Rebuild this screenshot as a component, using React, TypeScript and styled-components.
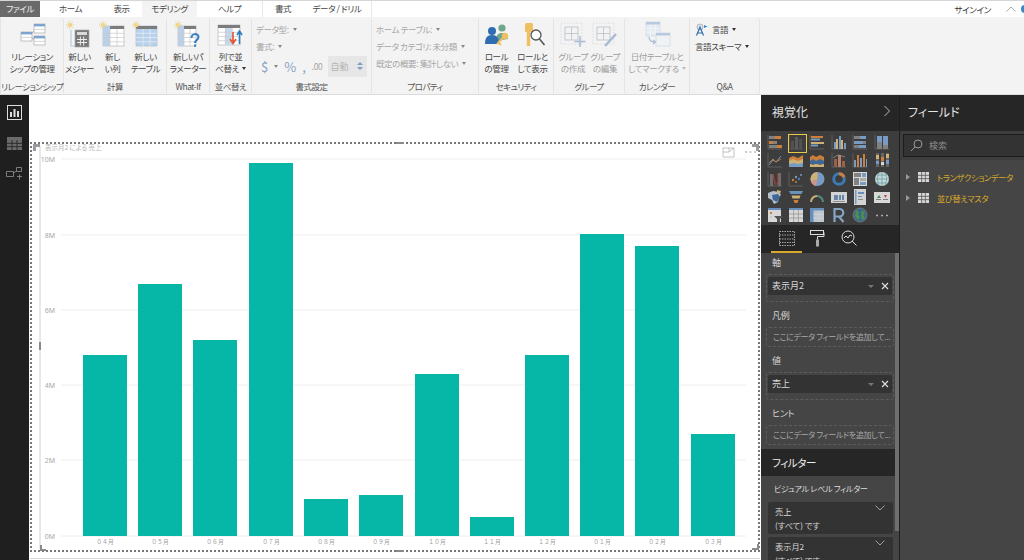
import React from 'react'
import styled, {createGlobalStyle} from 'styled-components'

const GlobalStyle = createGlobalStyle`
  html, body {
    margin: 0;
    padding: 0;
    background: #fff;
  }
  * {
    box-sizing: border-box;
  }
`

const Page = styled.div`
  width: 1024px;
  height: 560px;
  overflow: hidden;
  display: flex;
  flex-direction: column;
  font-family: "Noto Sans CJK JP", "Noto Sans", sans-serif;
  font-feature-settings: "palt";
  color: #444;
`

const TabBar = styled.div`
  height: 17px;
  flex: none;
  display: flex;
  align-items: stretch;
  border-top: 1px solid #d6d6d6;
  background: #fff;
  font-size: 8.5px;
  letter-spacing: -0.4px;
  line-height: 15px;
`

const Tab = styled.div<{$w: number; $active?: boolean; $file?: boolean; $sep?: boolean}>`
  width: ${p => p.$w}px;
  flex: none;
  text-align: center;
  white-space: nowrap;
  color: ${p => (p.$file ? '#eee' : '#444')};
  background: ${p => (p.$file ? '#6a6a6a' : p.$active ? '#f3f3f3' : '#fff')};
  border-right: ${p => (p.$sep ? '1px solid #e8e8e8' : 'none')};
`

const SignIn = styled.div`
  margin-left: auto;
  display: flex;
  align-items: center;
  gap: 5px;
  font-size: 8.5px;
  letter-spacing: -0.3px;
  color: #333;
`

const SignInLabel = styled.span`
  margin-right: 10px;
`

const Ribbon = styled.div`
  height: 78px;
  flex: none;
  display: flex;
  background: #f3f3f3;
  border-bottom: 1px solid #dcdcdc;
  border-left: 1px solid #e4e4e4;
`

const Group = styled.section<{$w: number}>`
  width: ${p => p.$w}px;
  flex: none;
  display: flex;
  flex-direction: column;
  margin: 2px 0 1px;
  border-right: 1px solid #e4e4e4;
`

const GroupBody = styled.div<{$disabled?: boolean; $shift?: number}>`
  flex: 1;
  display: flex;
  justify-content: center;
  min-height: 0;
  padding-right: ${p => p.$shift ?? 0}px;
  opacity: ${p => (p.$disabled ? 0.5 : 1)};
`

const GroupTitle = styled.div`
  height: 13px;
  flex: none;
  text-align: center;
  font-size: 8.5px;
  letter-spacing: -0.5px;
  line-height: 13px;
  color: #555;
  white-space: nowrap;
`

const RibbonButton = styled.div<{$w?: number}>`
  width: ${p => p.$w ?? 33}px;
  flex: none;
  display: flex;
  flex-direction: column;
  align-items: center;
  padding-top: 2px;
  font-size: 8.5px;
  letter-spacing: -0.4px;
  line-height: 12px;
  text-align: center;
  white-space: nowrap;
  color: #444;

  svg {
    display: block;
    margin-bottom: 1px;
  }
`

const ButtonLine = styled.span`
  display: flex;
  align-items: center;
  gap: 3px;
`

const OptionColumn = styled.div<{$pad: number}>`
  flex: 1;
  display: flex;
  flex-direction: column;
  padding: 4px 0 0 ${p => p.$pad}px;
  gap: 4px;
  position: relative;
`

const OptionRow = styled.div<{$color?: string}>`
  height: 13px;
  display: flex;
  align-items: center;
  gap: 4px;
  font-size: 8.5px;
  letter-spacing: -0.4px;
  line-height: 13px;
  white-space: nowrap;
  color: ${p => p.$color ?? '#a5a5a5'};
`

const Caret = styled.span<{$dark?: boolean}>`
  display: inline-block;
  width: 0;
  height: 0;
  border-left: 2.5px solid transparent;
  border-right: 2.5px solid transparent;
  border-top: 3px solid ${p => (p.$dark ? '#333' : '#888')};
`

const FormatRow = styled.div`
  display: flex;
  align-items: center;
  height: 22px;
  margin-top: -2px;
  padding: 0 4px 0 5px;
  color: #8aa4c6;
  font-size: 13px;
  gap: 6px;
`

const Spinner = styled.div`
  width: 40px;
  height: 21px;
  margin-left: auto;
  background: #e6e6e6;
  color: #b5b5b5;
  font-size: 9px;
  display: flex;
  align-items: center;
  justify-content: space-between;
  padding: 0 4px 0 2px;
`

const SpinArrows = styled.div`
  display: flex;
  flex-direction: column;
  gap: 2px;
  align-items: center;
`

const SpinUp = styled.span`
  width: 0;
  height: 0;
  border-left: 3px solid transparent;
  border-right: 3px solid transparent;
  border-bottom: 3px solid #7f9cc0;
`

const SpinDown = styled(SpinUp)`
  border-bottom: none;
  border-top: 3px solid #7f9cc0;
`

const Body = styled.div`
  flex: 1;
  display: flex;
  min-height: 0;
`

const Rail = styled.nav`
  width: 29px;
  flex: none;
  background: #1f1f1f;
  display: flex;
  flex-direction: column;
  align-items: center;
  gap: 16px;
  padding-top: 10px;
`

const Canvas = styled.main`
  width: 732px;
  flex: none;
  background: #fff;
  padding: 47px 1px 0 1px;
`

const VisualFrame = styled.div`
  height: 410px;
  border: 2px dotted #777;
  position: relative;
`

const ChartSvg = styled.svg`
  display: block;
  position: absolute;
  left: -2px;
  top: -2px;
`

const MonthLabel = styled.text`
  font-family: "Noto Sans CJK JP", sans-serif;
  font-feature-settings: normal;
  font-size: 5.8px;
  fill: #a0a0a0;
  text-anchor: middle;
`

const CanvasEdge = styled.div`
  height: 1px;
  margin-top: 6px;
  background: #d8d8d8;
`

const VizPanel = styled.aside`
  width: 139px;
  flex: none;
  background: #454545;
  display: flex;
  flex-direction: column;
  border-right: 1px solid #1e1e1e;
  min-height: 0;
`

const FieldPanel = styled.aside`
  flex: 1;
  background: #454545;
  display: flex;
  flex-direction: column;
  min-width: 0;
`

const PanelHeader = styled.header<{$left: number}>`
  height: 36px;
  flex: none;
  background: #262626;
  color: #e4e4e4;
  font-size: 12px;
  display: flex;
  align-items: center;
  justify-content: space-between;
  padding: 0 8px 4px ${p => p.$left}px;
`

const Gallery = styled.div`
  height: 94px;
  flex: none;
  background: #3d3d3d;
  display: grid;
  grid-template-columns: repeat(6, 21.4px);
  grid-auto-rows: 18.3px;
  padding: 2px 0 0 3px;
`

const GalleryCell = styled.div<{$selected?: boolean}>`
  display: flex;
  align-items: center;
  justify-content: center;
  position: relative;
  svg {
    opacity: 0.88;
  }
  &::after {
    content: '';
    display: ${p => (p.$selected ? 'block' : 'none')};
    position: absolute;
    left: 2.5px;
    top: 1px;
    width: 17px;
    height: 17px;
    border: 1px solid #e6c84a;
  }
`

const PaneTabs = styled.div`
  height: 28px;
  flex: none;
  background: #262626;
  display: flex;
  align-items: stretch;
  padding-left: 10px;
`

const PaneTab = styled.div<{$active?: boolean}>`
  width: 31px;
  display: flex;
  align-items: center;
  justify-content: center;
  border-bottom: 2px solid ${p => (p.$active ? '#d9a92b' : 'transparent')};
`

const WellArea = styled.div`
  flex: 1;
  min-height: 0;
  display: flex;
  position: relative;
`

const WellScroll = styled.div`
  flex: 1;
  min-width: 0;
  display: flex;
  flex-direction: column;
`

const ScrollThumb = styled.div`
  position: absolute;
  right: 0;
  top: 0;
  width: 4px;
  height: 278px;
  background: #6f6f6f;
`

const WellTitle = styled.div`
  font-size: 9px;
  letter-spacing: -0.2px;
  line-height: 14px;
  color: #d6d6d6;
  padding-left: 11px;
  margin-top: 3px;
`

const DropZone = styled.div<{$filled?: boolean}>`
  margin: 4px 5px 4px 5px;
  height: ${p => (p.$filled ? 28 : 20)}px;
  flex: none;
  border: 1px dashed #5c5c5c;
  border-radius: 3px;
  padding: ${p => (p.$filled ? '2px 1px' : '0 0 0 6px')};
  font-size: 8px;
  letter-spacing: -0.35px;
  line-height: 18px;
  color: #a9a9a9;
  white-space: nowrap;
  overflow: hidden;
`

const FieldPill = styled.div`
  height: 18px;
  background: #333;
  border-radius: 2px;
  color: #d8d8d8;
  font-size: 9px;
  letter-spacing: 0;
  display: flex;
  align-items: center;
  padding: 0 3px 0 4px;
`

const PillCaret = styled.span`
  margin-left: auto;
  margin-right: 7px;
  width: 0;
  height: 0;
  border-left: 3px solid transparent;
  border-right: 3px solid transparent;
  border-top: 3px solid #777;
`

const FilterHeader = styled.div`
  height: 27px;
  flex: none;
  background: #262626;
  color: #eee;
  font-size: 10.5px;
  letter-spacing: -0.4px;
  line-height: 27px;
  padding-left: 11px;
`

const FilterTitle = styled.div`
  font-size: 8px;
  letter-spacing: -0.25px;
  line-height: 14px;
  color: #ddd;
  padding: 6px 0 0 13px;
  margin-bottom: 6px;
`

const FilterCard = styled.div`
  margin: 0 6px 3px 7px;
  height: 32px;
  flex: none;
  background: #333;
  border-radius: 2px;
  color: #d8d8d8;
  font-size: 8.2px;
  line-height: 14px;
  padding: 2px 5px 0 7px;
  position: relative;
  svg {
    position: absolute;
    right: 8px;
    top: 3px;
  }
`

const SearchRow = styled.div`
  height: 29px;
  flex: none;
  background: #3d3d3d;
  padding: 3px 0 3px 3px;
`

const SearchBox = styled.div`
  height: 23px;
  background: #333;
  border: 1px solid #1c1c1c;
  border-right: none;
  display: flex;
  align-items: center;
  gap: 6px;
  padding-left: 6px;
  font-size: 9px;
  color: #8c8c8c;
`

const FieldTree = styled.div`
  padding: 8px 0 0 6px;
  display: flex;
  flex-direction: column;
  gap: 3px;
`

const TreeRow = styled.div`
  height: 18px;
  display: flex;
  align-items: center;
  font-size: 8.2px;
  letter-spacing: -0.35px;
  color: #d9a92b;
  white-space: nowrap;
  gap: 8px;
  svg {
    flex: none;
  }
`

const TreeCaret = styled.span`
  flex: none;
  width: 0;
  height: 0;
  border-top: 3px solid transparent;
  border-bottom: 3px solid transparent;
  border-left: 4px solid #999;
`

const Sun = ({x = 1, y = 1}: {x?: number; y?: number}) => (
  <g>
    <circle cx={x + 3} cy={y + 3} r="2.2" fill="#f0d68a" />
    <path
      d={`M${x + 3} ${y - 1}v1.4M${x + 3} ${y + 5.6}v1.4M${x - 1} ${y + 3}h1.4M${x + 5.6} ${y + 3}h1.4M${x + 0.2} ${y + 0.2}l1 1M${x + 4.8} ${y + 4.8}l1 1M${x + 5.8} ${y + 0.2}l-1 1M${x + 0.2} ${y + 5.8}l1-1`}
      stroke="#e3c06c"
      strokeWidth=".7"
    />
  </g>
)

const gridPath = (x: number, y: number, w: number, h: number, cols: number, rows: number) => {
  let d = ''
  for (let i = 1; i < cols; i++) d += `M${x + (w * i) / cols} ${y}v${h}`
  for (let i = 1; i < rows; i++) d += `M${x} ${y + (h * i) / rows}h${w}`
  return d
}

const Ico = ({w = 28, h = 28, children}: {w?: number; h?: number; children: React.ReactNode}) => (
  <svg width={w} height={h} viewBox={`0 0 ${w} ${h}`}>
    {children}
  </svg>
)

const MiniTable = ({x, y, w = 11, h = 9}: {x: number; y: number; w?: number; h?: number}) => (
  <g>
    <rect x={x} y={y} width={w} height={h} fill="#fff" stroke="#a9a9a9" strokeWidth=".7" />
    <rect x={x} y={y} width={w} height="2.4" fill="#7ea3cf" />
    <path d={`M${x} ${y + 5.4}h${w}`} stroke="#c4c4c4" strokeWidth=".7" />
  </g>
)

const RelationIcon = () => (
  <Ico>
    <path d="M13 13L18 8M13 16L18 20" stroke="#8c8c8c" strokeWidth=".8" fill="none" />
    <MiniTable x={16} y={3} />
    <MiniTable x={3} y={11} />
    <MiniTable x={16} y={15} />
  </Ico>
)

const MeasureIcon = () => (
  <Ico>
    <Sun x={1} y={1} />
    <path d="M5 9v16h6" stroke="#b5cde6" strokeWidth="1.2" fill="none" />
    <rect x="9" y="9" width="14" height="17" fill="#777" stroke="#aaa" strokeWidth=".7" />
    <rect x="11" y="11" width="10" height="3" fill="#d9d9d9" />
    <path d={gridPath(11, 15.5, 10, 9, 3, 3)} stroke="#eee" strokeWidth="1" />
  </Ico>
)

const ColumnIcon = () => (
  <Ico>
    <rect x="4" y="5" width="21" height="20" fill="#fff" stroke="#b5b5b5" strokeWidth=".7" />
    <rect x="4" y="5" width="21" height="3" fill="#7c7c7c" />
    <rect x="4" y="5" width="7" height="20" fill="#b9d1ea" />
    <path d={gridPath(4, 8, 21, 17, 3, 4)} stroke="#c9c9c9" strokeWidth=".7" />
    <Sun x={1} y={1} />
  </Ico>
)

const TableIcon = () => (
  <Ico>
    <rect x="4" y="5" width="21" height="20" fill="#b9d1ea" stroke="#a9bcd2" strokeWidth=".7" />
    <rect x="4" y="5" width="21" height="3" fill="#7c7c7c" />
    <path d={gridPath(4, 8, 21, 17, 3, 4)} stroke="#e8f0f8" strokeWidth=".7" />
    <Sun x={1} y={1} />
  </Ico>
)

const ParamIcon = () => (
  <Ico>
    <rect x="4" y="5" width="18" height="20" fill="#fff" stroke="#b5b5b5" strokeWidth=".7" />
    <rect x="4" y="5" width="18" height="3" fill="#7c7c7c" />
    <rect x="4" y="5" width="6" height="20" fill="#b9d1ea" />
    <path d={gridPath(4, 8, 18, 17, 3, 4)} stroke="#c9c9c9" strokeWidth=".7" />
    <Sun x={1} y={1} />
    <path d="M17.5 17c0-5 7-5 7-1 0 3-3.5 3-3.5 6" stroke="#2f7ec2" strokeWidth="2" fill="none" />
    <rect x="20" y="23.5" width="2" height="2.2" fill="#2f7ec2" />
  </Ico>
)

const SortIcon = () => (
  <Ico>
    <rect x="1" y="4" width="22" height="20" fill="#fff" stroke="#b5b5b5" strokeWidth=".7" />
    <rect x="1" y="4" width="22" height="3" fill="#7c7c7c" />
    <rect x="8" y="7" width="7" height="17" fill="#c6d8ec" />
    <path d={gridPath(1, 7, 22, 17, 3, 4)} stroke="#c9c9c9" strokeWidth=".7" />
    <path d="M16 11v11M13 18l3 4.5 3-4.5" stroke="#e0572b" strokeWidth="1.6" fill="none" />
    <path d="M22.5 23V10M20 14l2.5-4 2.5 4" stroke="#2f7ec2" strokeWidth="1.6" fill="none" />
  </Ico>
)

const RoleIcon = () => (
  <Ico>
    <circle cx="19" cy="7" r="3.6" fill="#6fa68c" />
    <path d="M13 20c0-6 2-8 6-8s6 2 6 6z" fill="#6fa68c" />
    <circle cx="9" cy="10" r="4" fill="#2f6db0" />
    <path d="M2 23c0-6 2-9 7-9s7 3 7 9z" fill="#2f6db0" />
    <circle cx="22" cy="15" r="3.2" fill="#f0bf62" />
    <path d="M20 17l-6 6M16 22l2 2" stroke="#f0bf62" strokeWidth="2" />
  </Ico>
)

const ViewAsIcon = () => (
  <Ico>
    <rect x="6" y="2" width="8" height="9" rx="1.5" fill="#f0bf62" />
    <path d="M9.5 10v15" stroke="#f0bf62" strokeWidth="3.4" />
    <circle cx="17" cy="14" r="5" fill="#fff" stroke="#555" strokeWidth="1.3" />
    <path d="M20.5 18l5 6" stroke="#555" strokeWidth="1.6" />
  </Ico>
)

const GroupAddIcon = () => (
  <Ico>
    <rect x="2" y="2" width="21" height="21" fill="#f3f3f3" stroke="#b5b5b5" strokeWidth=".7" strokeDasharray="1.5 1.5" />
    <rect x="6" y="6" width="13" height="13" fill="none" stroke="#8c99aa" strokeWidth=".9" />
    <path d="M12.5 6v13M6 12.5h13" stroke="#8c99aa" strokeWidth=".9" />
    <path d="M21 15v11M15.5 20.5h11" stroke="#5b84b3" strokeWidth="1.5" />
  </Ico>
)

const GroupEditIcon = () => (
  <Ico>
    <rect x="2" y="2" width="21" height="21" fill="#f3f3f3" stroke="#b5b5b5" strokeWidth=".7" strokeDasharray="1.5 1.5" />
    <rect x="6" y="6" width="13" height="13" fill="none" stroke="#8c99aa" strokeWidth=".9" />
    <path d="M12.5 6v13M6 12.5h13" stroke="#8c99aa" strokeWidth=".9" />
    <path d="M14 25l11-12" stroke="#5b84b3" strokeWidth="2.4" />
  </Ico>
)

const DateIcon = () => (
  <Ico>
    <rect x="3" y="1" width="14" height="14" fill="#d7e5f3" stroke="#a9bcd2" strokeWidth=".7" />
    <rect x="3" y="1" width="14" height="2.5" fill="#7ea3cf" />
    <path d={gridPath(3, 3.5, 14, 11.5, 3, 3)} stroke="#fff" strokeWidth=".7" />
    <rect x="13" y="12" width="14" height="13" fill="#eef3f8" stroke="#a9bcd2" strokeWidth=".7" />
    <rect x="13" y="12" width="14" height="2.5" fill="#7ea3cf" />
    <path d="M6 16c0 4 2 5 6 5M10 19l2.500 2-2.500 2" stroke="#5b84b3" strokeWidth="1.1" fill="none" />
  </Ico>
)

const LanguageIcon = () => (
  <Ico w={13} h={13}>
    <circle cx="5" cy="4" r="3" fill="#dfe9f3" stroke="#8a8a8a" strokeWidth=".6" />
    <path d="M1.500 12.500L5 4l3.500 8.500M3 10h4" stroke="#2f6db0" strokeWidth="1.2" fill="none" />
    <path d="M9 2l3.500 1.500L9 5z" fill="#3c86c6" />
  </Ico>
)

type Rect = [number, number, number, number, string]
const OR = '#e0883a'
const GR = '#8b8b8b'
const BL = '#7fa9d6'
const TN = '#e3c27e'
const BR = '#a9664a'

const bars = (rects: Rect[]) => (
  <>
    {rects.map(([x, y, w, h, fill], i) => (
      <rect key={i} x={x} y={y} width={w} height={h} fill={fill} />
    ))}
  </>
)

const axes = <path d="M1 1v14h14" stroke="#707070" strokeWidth=".8" fill="none" />

const galleryIcons: React.ReactNode[] = [
  <>{axes}{bars([[2, 2, 6, 3, GR], [8, 2, 6, 3, OR], [2, 7, 4, 3, OR], [6, 7, 4, 3, GR], [2, 11, 8, 3, GR], [10, 11, 5, 3, OR]])}</>,
  <>{axes}{bars([[3, 7, 3, 8, '#555'], [7, 3, 3, 12, '#606060'], [11, 5, 3, 10, '#555']])}</>,
  <>{axes}{bars([[2, 2, 12, 2, OR], [2, 4.500, 9, 2, BL], [2, 8, 13, 2, TN], [2, 10.500, 7, 2, BL]])}</>,
  <>{axes}{bars([[3, 8, 2, 7, BL], [5, 5, 2, 10, TN], [8, 2, 2, 13, BL], [10, 6, 2, 9, TN], [13, 9, 2, 6, BL]])}</>,
  <>{axes}{bars([[2, 2, 6, 3, GR], [8, 2, 6, 3, BL], [2, 7, 9, 3, BL], [11, 7, 3, 3, GR], [2, 11, 5, 3, GR], [7, 11, 7, 3, BL]])}</>,
  <>{axes}{bars([[3, 2, 5, 6, BL], [3, 8, 5, 7, GR], [9, 2, 5, 9, BL], [9, 11, 5, 4, GR]])}</>,
  <>{axes}<path d="M2 13l4-5 3 2 5-6" stroke={BL} fill="none" strokeWidth=".9" /><path d="M2 11l4-4 3 3 5-3" stroke={OR} fill="none" strokeWidth=".9" /></>,
  <><path d="M1 6l4-2 5 2 5-3v12H1z" fill={OR} /><path d="M1 9l4-2 5 2 5-2v8H1z" fill={TN} /><path d="M1 12l5-1 4 1 5-1v4H1z" fill={BL} /></>,
  <><path d="M1 5l3-2 3 2 4-2 4 2v10H1z" fill={OR} /><path d="M1 9l3-2 3 2 4-2 4 2v3l-4 1-4-1-3 1-3-1z" fill="#3f6ea3" /><path d="M1 12l3 1 3-1 4 1 4-1v3H1z" fill={TN} /></>,
  <>{axes}{bars([[3, 7, 3, 8, BR], [7, 3, 3, 12, '#c98a6c'], [11, 9, 3, 6, BR]])}<path d="M2 6l5-3 7 2" stroke="#aaa" fill="none" strokeWidth=".7" /></>,
  <>{axes}{bars([[2, 8, 2, 7, BL], [5, 3, 2, 12, OR], [8, 6, 2, 9, BL], [11, 2, 2, 13, OR], [14, 7, 1, 8, BL]])}</>,
  <>{bars([[2, 1, 3, 14, '#6c6c6c'], [7, 1, 3, 14, '#6c6c6c'], [12, 1, 3, 14, '#6c6c6c'], [2, 3, 3, 4, TN], [7, 5, 3, 4, OR], [12, 2, 3, 4, TN], [2, 9, 3, 3, BL], [7, 10, 3, 3, '#eee'], [12, 8, 3, 4, BL]])}</>,
  <>{axes}{bars([[3, 3, 3, 12, '#777'], [11, 2, 3, 13, '#777']])}<path d="M6 3l2 10h3V2" stroke="#b5473a" fill="none" strokeWidth="1.2" /></>,
  <>{axes}<circle cx="5" cy="9" r="1.200" fill={OR} /><circle cx="8" cy="6" r="1.200" fill={BL} /><circle cx="11" cy="8" r="1.200" fill="#4c86c8" /><circle cx="13" cy="4" r="1" fill={BL} /><circle cx="8" cy="11" r="1" fill={OR} /></>,
  <><circle cx="8.500" cy="8" r="7" fill={BL} /><path d="M8.500 8V1a7 7 0 0 0-6.500 9.500z" fill={TN} /><path d="M8.500 8L2 10.500A7 7 0 0 0 7 15z" fill="#e0a090" /></>,
  <><circle cx="8" cy="8" r="5.300" fill="none" stroke="#3d82c4" strokeWidth="3" /><path d="M8 2.700a5.300 5.300 0 0 1 5 3.500" fill="none" stroke={OR} strokeWidth="3" /></>,
  <>{bars([[1, 1, 14, 14, '#eee'], [2, 2, 7, 4, GR], [10, 2, 4, 4, BL], [2, 7, 5, 7, GR], [8, 7, 6, 3, '#bbb'], [8, 11, 6, 3, BL]])}</>,
  <><circle cx="8" cy="8" r="7" fill="#d6ecec" /><path d="M1 8h14M8 1v14M3 4h10M3 12h10M5 2c-2 4-2 8 0 12M11 2c2 4 2 8 0 12" stroke="#5a9aa8" strokeWidth=".6" fill="none" /></>,
  <><path d="M1 4l5-2 6 1 2 3-2 2-1 5-4 2-2-4-4-2z" fill="#c5d3e2" /><path d="M5 6l6-1 2 3-3 5-4-2z" fill="#3f6ea3" /><path d="M10 1l4 1-1 3-3-1z" fill={TN} /></>,
  <><path d="M1 2h14l-1.500 3h-11z" fill="#6f9fce" /><path d="M3.500 6.500h9l-1 3h-7z" fill={TN} /><path d="M5.500 11h5l-1 3h-3z" fill={OR} /></>,
  <><path d="M2 13a6 6 0 0 1 6-6" stroke={TN} strokeWidth="2" fill="none" /><path d="M8 7a6 6 0 0 1 6 6" stroke="#5a9a8c" strokeWidth="2" fill="none" /></>,
  <>{bars([[0, 3, 16, 11, '#e8e8e8'], [3, 6, 4, 5, '#6d8fb5'], [8, 6, 2, 5, '#6d8fb5'], [11, 6, 2, 5, '#6d8fb5'], [2, 12, 12, 1, '#999']])}</>,
  <>{bars([[2, 0, 12, 16, '#e8e8e8'], [3, 1, 1.500, 14, BL], [6, 3, 6, 2, '#6d9bd0'], [6, 7, 4, 1, '#6d9bd0'], [6, 10, 5, 1, '#999']])}</>,
  <>{bars([[0, 3, 16, 11, '#eee'], [2, 10, 5, 1, '#888'], [9, 10, 5, 1, '#888']])}<path d="M3 9l2-3 2 3z" fill="#4c9a6a" /><path d="M10 6h3l-1.500 3z" fill="#c0504d" /></>,
  <>{bars([[1, 1, 13, 14, '#eee'], [1, 1, 13, 2, '#6d9bd0'], [3, 5, 2, 2, OR], [3, 9, 2, 2, '#ddd']])}<path d="M7 9h9l-3 3v4l-3-1v-3z" fill="#555" /></>,
  <><rect x="1" y="1" width="14" height="14" fill="#eee" /><rect x="1" y="1" width="14" height="2" fill="#6d9bd0" /><path d={gridPath(1, 3, 14, 12, 3, 3)} stroke="#999" strokeWidth=".7" /></>,
  <><rect x="1" y="1" width="14" height="14" fill="#cfd9e4" /><rect x="1" y="1" width="14" height="2.500" fill="#6d9bd0" /><rect x="1" y="1" width="3.500" height="14" fill="#6d9bd0" /><path d={gridPath(4.500, 3.500, 10.500, 11.500, 2, 3)} stroke="#eee" strokeWidth=".7" /></>,
  <path d="M3.500 15V2h5a3.500 3.500 0 0 1 0 7.500h-5M8 9.500l4.500 5.500" stroke="#8fb3d9" strokeWidth="2.200" fill="none" />,
  <><circle cx="8" cy="8" r="7" fill="#3c6f8f" /><path d="M4 3l3 2-1 3 2 2-2 3-3-4zM10 3l3 3-2 2 2 3-3 2-1-5z" fill="#4f9d55" /><circle cx="8" cy="8" r="7" fill="none" stroke="#999" strokeWidth=".6" /></>,
  <path d="M2 8.500h2M7 8.500h2M12 8.500h2" stroke="#bbb" strokeWidth="1.600" />,
]

const months = ['０４月', '０５月', '０６月', '０７月', '０８月', '０９月', '１０月', '１１月', '１２月', '０１月', '０２月', '０３月']
const barX = [83, 138, 193, 249, 304, 359, 415, 470, 525, 580, 635, 691]
const barTop = [355, 284, 340, 163, 499, 495, 374, 517, 355, 234, 246, 434]
const yTicks: [string, number][] = [['10M', 159], ['8M', 235], ['6M', 310], ['4M', 385], ['2M', 460], ['0M', 536]]

const BarChart = () => (
  <ChartSvg width="730" height="410" viewBox="30 142 730 410" fontFamily="Noto Sans, Noto Sans CJK JP, sans-serif">
    <path d="M40 146V549" stroke="#d0d0d0" strokeWidth="1" />
    <text x="45" y="150" fontSize="6.5" fill="#b5b5b5" fontFamily="Noto Sans CJK JP">表示月2 による 売上</text>
    {yTicks.map(([label, y]) => (
      <g key={label}>
        <path d={`M61 ${y}H746`} stroke="#eeeeee" strokeWidth="1" />
        <text x="55" y={y + 2.500} fontSize="7" textAnchor="end" fill="#a8a8a8">{label}</text>
      </g>
    ))}
    {barX.map((x, i) => (
      <g key={x}>
        <rect x={x} y={barTop[i]} width="44" height={536 - barTop[i]} fill="#06b7a8" />
        <MonthLabel x={x + 22} y="544">{months[i]}</MonthLabel>
      </g>
    ))}
    <path d="M33 144h7v3h-4v4h-3zM756 144h3v7h-3v-4h-4v-3z" fill="#9a9a9a" />
    <path d="M40 545h2v4h4v2h-6zM396 142h8v2h-8zM39 342h2v8h-2zM396 550h8v2h-8zM752 550h7v-6h-2v4h-5z" fill="#8a8a8a" />
    <path d="M723 148h11v9h-11zM729 148v4h-6M729 152l5-4" stroke="#bdbdbd" strokeWidth=".9" fill="none" />
    <path d="M745 152h2M749.500 152h2M754 152h2" stroke="#999" strokeWidth="1.200" />
  </ChartSvg>
)

const GalleryIcon = ({children}: {children: React.ReactNode}) => (
  <svg width="16" height="16" viewBox="0 0 16 16">
    {children}
  </svg>
)

const CloseX = () => (
  <svg width="8" height="8" viewBox="0 0 8 8">
    <path d="M1 1l6 6M7 1L1 7" stroke="#ddd" strokeWidth="1.200" />
  </svg>
)

const Chevron = () => (
  <svg width="10" height="6" viewBox="0 0 10 6">
    <path d="M.5.500L5 5 9.500.500" stroke="#bbb" strokeWidth=".8" fill="none" />
  </svg>
)

const SmallTable = () => (
  <svg width="11" height="10" viewBox="0 0 11 10">
    <rect width="11" height="10" fill="#d8d8d8" />
    <path d={gridPath(0, 0, 11, 10, 3, 3)} stroke="#555" strokeWidth=".8" />
  </svg>
)

const App = () => (
  <Page>
    <GlobalStyle />
    <TabBar>
      <Tab $w={40} $file>ファイル</Tab>
      <Tab $w={61}>ホーム</Tab>
      <Tab $w={41}>表示</Tab>
      <Tab $w={55} $active>モデリング</Tab>
      <Tab $w={66} $sep>ヘルプ</Tab>
      <Tab $w={40}>書式</Tab>
      <Tab $w={69} $sep>データ / ドリル</Tab>
      <SignIn>
        <SignInLabel>サインイン</SignInLabel>
        <svg width="10" height="6" viewBox="0 0 10 6">
          <path d="M.5 5.500L5 1l4.500 4.500" stroke="#aaa" fill="none" />
        </svg>
        <svg width="3" height="8" viewBox="0 0 3 8">
          <circle cx="4" cy="4" r="4" fill="#3c86c6" />
        </svg>
      </SignIn>
    </TabBar>
    <Ribbon>
      <Group $w={63}>
        <GroupBody>
          <RibbonButton $w={62}>
            <RelationIcon />
            リレーション
            <br />
            シップの管理
          </RibbonButton>
        </GroupBody>
        <GroupTitle>リレーションシップ</GroupTitle>
      </Group>
      <Group $w={103}>
        <GroupBody $shift={5}>
          <RibbonButton><MeasureIcon />新しい<br />メジャー</RibbonButton>
          <RibbonButton><ColumnIcon />新し<br />い列</RibbonButton>
          <RibbonButton><TableIcon />新しい<br />テーブル</RibbonButton>
        </GroupBody>
        <GroupTitle>計算</GroupTitle>
      </Group>
      <Group $w={43}>
        <GroupBody>
          <RibbonButton $w={42}><ParamIcon />新しいパ<br />ラメーター</RibbonButton>
        </GroupBody>
        <GroupTitle>What-If</GroupTitle>
      </Group>
      <Group $w={42}>
        <GroupBody>
          <RibbonButton $w={41}>
            <SortIcon />
            列で並
            <ButtonLine>べ替え<Caret $dark /></ButtonLine>
          </RibbonButton>
        </GroupBody>
        <GroupTitle>並べ替え</GroupTitle>
      </Group>
      <Group $w={120}>
        <OptionColumn $pad={4}>
          <OptionRow>データ型: <Caret /></OptionRow>
          <OptionRow>書式: <Caret /></OptionRow>
          <FormatRow>
            <span>$</span>
            <Caret />
            <span>%</span>
            <span>,</span>
            <OptionRow>.00</OptionRow>
            <Spinner>
              自動
              <SpinArrows><SpinUp /><SpinDown /></SpinArrows>
            </Spinner>
          </FormatRow>
        </OptionColumn>
        <GroupTitle>書式設定</GroupTitle>
      </Group>
      <Group $w={107}>
        <OptionColumn $pad={4}>
          <OptionRow>ホーム テーブル: <Caret /></OptionRow>
          <OptionRow>データ カテゴリ: 未分類 <Caret /></OptionRow>
          <OptionRow>既定の概要: 集計しない <Caret /></OptionRow>
        </OptionColumn>
        <GroupTitle>プロパティ</GroupTitle>
      </Group>
      <Group $w={75}>
        <GroupBody $shift={3}>
          <RibbonButton $w={36}><RoleIcon />ロール<br />の管理</RibbonButton>
          <RibbonButton $w={36}><ViewAsIcon />ロールと<br />して表示</RibbonButton>
        </GroupBody>
        <GroupTitle>セキュリティ</GroupTitle>
      </Group>
      <Group $w={71}>
        <GroupBody $disabled>
          <RibbonButton $w={32}><GroupAddIcon />グループ<br />の作成</RibbonButton>
          <RibbonButton $w={32}><GroupEditIcon />グループ<br />の編集</RibbonButton>
        </GroupBody>
        <GroupTitle>グループ</GroupTitle>
      </Group>
      <Group $w={65}>
        <GroupBody $disabled>
          <RibbonButton $w={64}>
            <DateIcon />
            日付テーブルと
            <ButtonLine>してマークする<Caret /></ButtonLine>
          </RibbonButton>
        </GroupBody>
        <GroupTitle>カレンダー</GroupTitle>
      </Group>
      <Group $w={70}>
        <OptionColumn $pad={5}>
          <OptionRow $color="#444"><LanguageIcon />言語 <Caret $dark /></OptionRow>
          <OptionRow $color="#444">言語スキーマ <Caret $dark /></OptionRow>
        </OptionColumn>
        <GroupTitle>Q&amp;A</GroupTitle>
      </Group>
    </Ribbon>
    <Body>
      <Rail>
        <svg width="15" height="15" viewBox="0 0 15 15">
          <rect x=".5" y=".5" width="14" height="14" fill="none" stroke="#ddd" />
          <path d="M3 12V7h2v5zM6.500 12V4h2v8zM10 12V6h2v6z" fill="#ddd" />
        </svg>
        <svg width="15" height="15" viewBox="0 0 15 15">
          <rect y="1" width="15" height="13" fill="#6a6a6a" />
          <path d={gridPath(0, 4, 15, 10, 3, 3)} stroke="#1f1f1f" strokeWidth=".8" />
        </svg>
        <svg width="17" height="15" viewBox="0 0 17 15">
          <path d="M.5 4.500h7v5h-7zM10.500.5h5v4h-5zM7.500 6l3-2M11 9.500h5M13.500 7.500v5" stroke="#888" fill="none" strokeWidth=".9" />
        </svg>
      </Rail>
      <Canvas>
        <VisualFrame>
          <BarChart />
        </VisualFrame>
        <CanvasEdge />
      </Canvas>
      <VizPanel>
        <PanelHeader $left={11}>
          視覚化
          <svg width="8" height="12" viewBox="0 0 8 12">
            <path d="M1.500 1l5 5-5 5" stroke="#bbb" fill="none" />
          </svg>
        </PanelHeader>
        <Gallery>
          {galleryIcons.map((icon, i) => (
            <GalleryCell key={i} $selected={i === 1}>
              <GalleryIcon>{icon}</GalleryIcon>
            </GalleryCell>
          ))}
        </Gallery>
        <PaneTabs>
          <PaneTab $active>
            <svg width="16" height="15" viewBox="0 0 16 15">
              <path d="M.5.500h15v14H.5zM.5 4h15M.5 8h15M.5 11.500h15" stroke="#ccc" strokeDasharray="1.500 1" fill="none" strokeWidth=".8" />
            </svg>
          </PaneTab>
          <PaneTab>
            <svg width="15" height="17" viewBox="0 0 15 17">
              <rect x=".5" y=".5" width="13" height="4" fill="none" stroke="#ddd" />
              <path d="M14 2.500v4H7.500v3" stroke="#ddd" fill="none" />
              <rect x="6" y="9.500" width="3" height="7" fill="#aaa" />
            </svg>
          </PaneTab>
          <PaneTab>
            <svg width="16" height="16" viewBox="0 0 16 16">
              <circle cx="7" cy="7" r="6" fill="none" stroke="#ddd" />
              <path d="M11 11l4.500 4.500M3 8l2-2 2 2 2-3 2 1" stroke="#ddd" fill="none" />
            </svg>
          </PaneTab>
        </PaneTabs>
        <WellArea>
          <ScrollThumb />
          <WellScroll>
            <WellTitle>軸</WellTitle>
            <DropZone $filled>
              <FieldPill>表示月2<PillCaret /><CloseX /></FieldPill>
            </DropZone>
            <WellTitle>凡例</WellTitle>
            <DropZone>ここにデータ フィールドを追加して...</DropZone>
            <WellTitle>値</WellTitle>
            <DropZone $filled>
              <FieldPill>売上<PillCaret /><CloseX /></FieldPill>
            </DropZone>
            <WellTitle>ヒント</WellTitle>
            <DropZone>ここにデータ フィールドを追加して...</DropZone>
            <FilterHeader>フィルター</FilterHeader>
            <FilterTitle>ビジュアル レベル フィルター</FilterTitle>
            <FilterCard>売上<br />(すべて) です<Chevron /></FilterCard>
            <FilterCard>表示月2<br />(すべて) です<Chevron /></FilterCard>
          </WellScroll>
        </WellArea>
      </VizPanel>
      <FieldPanel>
        <PanelHeader $left={8}>フィールド</PanelHeader>
        <SearchRow>
          <SearchBox>
            <svg width="13" height="13" viewBox="0 0 13 13">
              <circle cx="8" cy="5" r="4" fill="none" stroke="#999" />
              <path d="M5 8l-4 4" stroke="#999" />
            </svg>
            検索
          </SearchBox>
        </SearchRow>
        <FieldTree>
          <TreeRow><TreeCaret /><SmallTable />トランザクションデータ</TreeRow>
          <TreeRow><TreeCaret /><SmallTable />並び替えマスタ</TreeRow>
        </FieldTree>
      </FieldPanel>
    </Body>
  </Page>
)

export default App
